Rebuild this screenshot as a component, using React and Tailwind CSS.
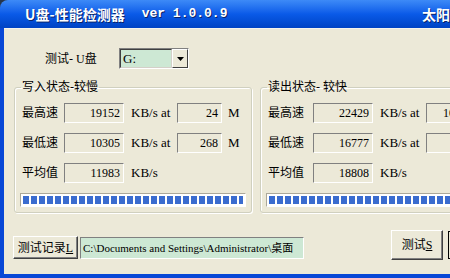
export default function App() {
  const Box = ({ w, children }) => (
    <div className={`${w} h-[20px] shrink-0 border border-t-[#808080] border-l-[#808080] border-b-white border-r-white flex items-center justify-end pr-[3px] text-[12px] font-['Liberation_Serif',serif] text-black`}>
      {children}
    </div>
  );

  const Row = ({ label, v1, v2, unit, lw }) => (
    <div className="flex items-center h-[20px] ml-[2px]">
      <div className={`${lw} shrink-0 text-[12px] leading-none`}>{label}</div>
      <Box w="w-[60px]">{v1}</Box>
      {v2 !== undefined ? (
        <>
          <div className="w-[46px] shrink-0 ml-[7px] text-[13px] font-['Liberation_Serif',serif] whitespace-nowrap">KB/s at</div>
          <Box w="w-[45px]">{v2}</Box>
          <div className="ml-[6px] text-[13px] font-['Liberation_Serif',serif]">{unit}</div>
        </>
      ) : (
        <div className="ml-[7px] text-[13px] font-['Liberation_Serif',serif]">KB/s</div>
      )}
    </div>
  );

  const Group = ({ title, rows, lw }) => (
    <fieldset className="w-[238px] shrink-0 border border-[#d0d0bf] rounded-[3px] px-[5px] pb-[5px] shadow-[1px_1px_0_#ffffff,inset_1px_1px_0_#ffffff]">
      <legend className="ml-[1px] px-[1px] text-[12px] leading-[14px] text-black">{title}</legend>
      <div className="mt-[9px] flex flex-col gap-[10px]">
        {rows.map((r, i) => (
          <Row key={i} lw={lw} {...r} />
        ))}
        <div className="h-[14px] border border-t-[#aca899] border-l-[#aca899] border-b-white border-r-white bg-white p-[2px]">
          <div className="h-full w-full bg-[repeating-linear-gradient(90deg,#3a6ccf_0px,#3a6ccf_6px,#ffffff_6px,#ffffff_8px)]"></div>
        </div>
      </div>
    </fieldset>
  );

  return (
    <div className="w-[450px] h-[278px] overflow-hidden bg-[#26354a] flex flex-col font-['Liberation_Serif','Noto_Sans_CJK_SC',serif] text-black">
      <div className="h-[28px] shrink-0 rounded-tl-[8px] bg-gradient-to-b from-[#3d8af7] via-[#0a5ae8] to-[#0043c4] flex items-center pl-[25px] text-white font-bold whitespace-nowrap overflow-hidden">
        <div className="w-[397px] shrink-0 flex items-center">
          <span className="text-[14px] font-['Noto_Sans_CJK_SC',sans-serif] [text-shadow:1px_1px_0_#0a246a]">U盘-性能检测器</span>
          <span className="ml-[17px] text-[13px] font-['Liberation_Mono',monospace] [text-shadow:1px_1px_0_#0a246a]">ver 1.0.0.9</span>
        </div>
        <span className="text-[14px] font-['Noto_Sans_CJK_SC',sans-serif] [text-shadow:1px_1px_0_#0a246a]">太阳花</span>
      </div>
      <div className="flex-1 flex bg-[#0847d6] pl-[4px] pb-[4px] overflow-hidden">
        <div className="flex-1 bg-[#ece9d8] flex flex-col overflow-hidden border-t border-[#f6f4ec]">
          <div className="mt-[19px] h-[21px] flex items-center pl-[41px]">
            <div className="w-[74px] shrink-0 text-[12px]">测试- U盘</div>
            <div className="w-[70px] h-[21px] shrink-0 border border-t-[#808080] border-l-[#808080] border-b-white border-r-white flex">
              <div className="flex-1 bg-[#cde8d4] border border-t-[#404040] border-l-[#404040] border-b-[#d4d0c8] border-r-[#d4d0c8] text-[13px] leading-[17px] pl-[2px]">G:</div>
              <div className="w-[16px] h-full bg-[#ece9d8] border border-t-white border-l-white border-b-[#404040] border-r-[#404040] flex items-center justify-center">
                <svg width="7" height="4" viewBox="0 0 7 4"><path d="M0 0H7L3.5 4Z" fill="#000" /></svg>
              </div>
            </div>
          </div>
          <div className="mt-[11px] flex gap-[8px] pl-[10px]">
            <Group
              title="写入状态-较慢"
              lw="w-[42px]"
              rows={[
                { label: "最高速", v1: "19152", v2: "24", unit: "M" },
                { label: "最低速", v1: "10305", v2: "268", unit: "M" },
                { label: "平均值", v1: "11983" },
              ]}
            />
            <Group
              title="读出状态- 较快"
              lw="w-[45px]"
              rows={[
                { label: "最高速", v1: "22429", v2: "1024", unit: "M" },
                { label: "最低速", v1: "16777", v2: "", unit: "M" },
                { label: "平均值", v1: "18808" },
              ]}
            />
          </div>
          <div className="mt-[17px] h-[30px] flex items-end pl-[9px]">
            <div className="w-[65px] h-[23px] shrink-0 mb-[1px] bg-[#ece9d8] border border-t-white border-l-white border-b-[#404040] border-r-[#404040] shadow-[inset_-1px_-1px_0_#808080] flex items-center justify-center text-[12px] whitespace-nowrap">
              测试记录<span className="underline">L</span>
            </div>
            <div className="ml-[2px] w-[224px] h-[22px] shrink-0 mb-[1px] border border-t-[#808080] border-l-[#808080] border-b-white border-r-white bg-[#cde8d4] flex items-center pl-[2px] text-[11px] whitespace-nowrap overflow-hidden">
              C:\Documents and Settings\Administrator\桌面
            </div>
            <div className="ml-[87px] w-[52px] h-[30px] shrink-0 bg-[#ece9d8] border border-t-white border-l-white border-b-[#404040] border-r-[#404040] shadow-[inset_-1px_-1px_0_#808080] flex items-center justify-center text-[12px]">
              测试<span className="underline">S</span>
            </div>
            <div className="ml-[5px] w-[60px] h-[28px] shrink-0 mb-[1px] bg-[#ece9d8] border border-[#000000]"></div>
          </div>
        </div>
      </div>
    </div>
  );
}
